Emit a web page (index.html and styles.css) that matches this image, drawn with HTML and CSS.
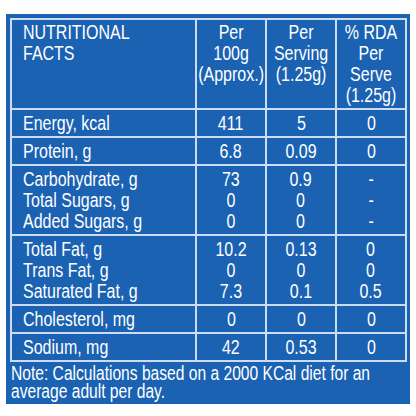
FILE: index.html
```html
<!DOCTYPE html>
<html lang="en">
<head>
    <meta charset="UTF-8">
    <meta name="viewport" content="width=device-width, initial-scale=1.0">
    <title>Nutritional Facts</title>
    <link rel="stylesheet" href="styles.css">
</head>
<body>
    <div class="panel">
        <table class="facts">
            <colgroup>
                <col class="col-name">
                <col class="col-val">
                <col class="col-val">
                <col class="col-val">
            </colgroup>
            <!-- Header -->
            <tr class="head">
                <td class="name"><span class="t">NUTRITIONAL<br>FACTS</span></td>
                <td><span class="t">Per<br>100g<br>(Approx.)</span></td>
                <td><span class="t">Per<br>Serving<br>(1.25g)</span></td>
                <td><span class="t">% RDA<br>Per<br>Serve<br>(1.25g)</span></td>
            </tr>
            <tr>
                <td class="name"><span class="t">Energy, kcal</span></td>
                <td><span class="t">411</span></td>
                <td><span class="t">5</span></td>
                <td><span class="t">0</span></td>
            </tr>
            <tr>
                <td class="name"><span class="t">Protein, g</span></td>
                <td><span class="t">6.8</span></td>
                <td><span class="t">0.09</span></td>
                <td><span class="t">0</span></td>
            </tr>
            <tr>
                <td class="name"><span class="t">Carbohydrate, g<br>Total Sugars, g<br>Added Sugars, g</span></td>
                <td><span class="t">73<br>0<br>0</span></td>
                <td><span class="t">0.9<br>0<br>0</span></td>
                <td><span class="t">-<br>-<br>-</span></td>
            </tr>
            <tr>
                <td class="name"><span class="t">Total Fat, g<br>Trans Fat, g<br>Saturated Fat, g</span></td>
                <td><span class="t">10.2<br>0<br>7.3</span></td>
                <td><span class="t">0.13<br>0<br>0.1</span></td>
                <td><span class="t">0<br>0<br>0.5</span></td>
            </tr>
            <tr>
                <td class="name"><span class="t">Cholesterol, mg</span></td>
                <td><span class="t">0</span></td>
                <td><span class="t">0</span></td>
                <td><span class="t">0</span></td>
            </tr>
            <tr>
                <td class="name"><span class="t">Sodium, mg</span></td>
                <td><span class="t">42</span></td>
                <td><span class="t">0.53</span></td>
                <td><span class="t">0</span></td>
            </tr>
        </table>
        <p class="note"><span class="t">Note: Calculations based on a 2000 KCal diet for an<br>average adult per day.</span></p>
    </div>
</body>
</html>
```

FILE: styles.css
```css
body {
    margin: 0;
    background: #fff;
    font-family: "Liberation Sans", Arial, sans-serif;
    color: #fff;
}

.panel {
    margin: 14px 6px 0 6px;
    width: 404px;
    height: 390px;
    box-sizing: border-box;
    background-color: #1b62b3;
    padding: 4px 5px 0 4px;
    overflow: hidden;
}

/* narrow look: glyphs squeezed sideways */
.t {
    display: inline-block;
    white-space: nowrap;
    transform: scaleX(0.82);
    margin: 0 -20px;
}

.facts {
    width: 395px;
    border-collapse: collapse;
    table-layout: fixed;
    font-size: 19.5px;
    line-height: 21px;
}

.col-name {
    width: 185px;
}

.col-val {
    width: 70px;
}

.facts td {
    border: 2px solid #cddcf0;
    padding: 3px 0 2px 0;
    text-align: center;
    vertical-align: top;
}

.facts td.name {
    text-align: left;
    padding-left: 11px;
}

.facts td.name .t,
.note .t {
    margin: 0;
    transform-origin: left center;
}

.facts .head td {
    padding-top: 2px;
}

.note {
    margin: 2px 0 0 1px;
    font-size: 19.5px;
    line-height: 18px;
}

.note .t {
    transform: scaleX(0.8);
}
```
